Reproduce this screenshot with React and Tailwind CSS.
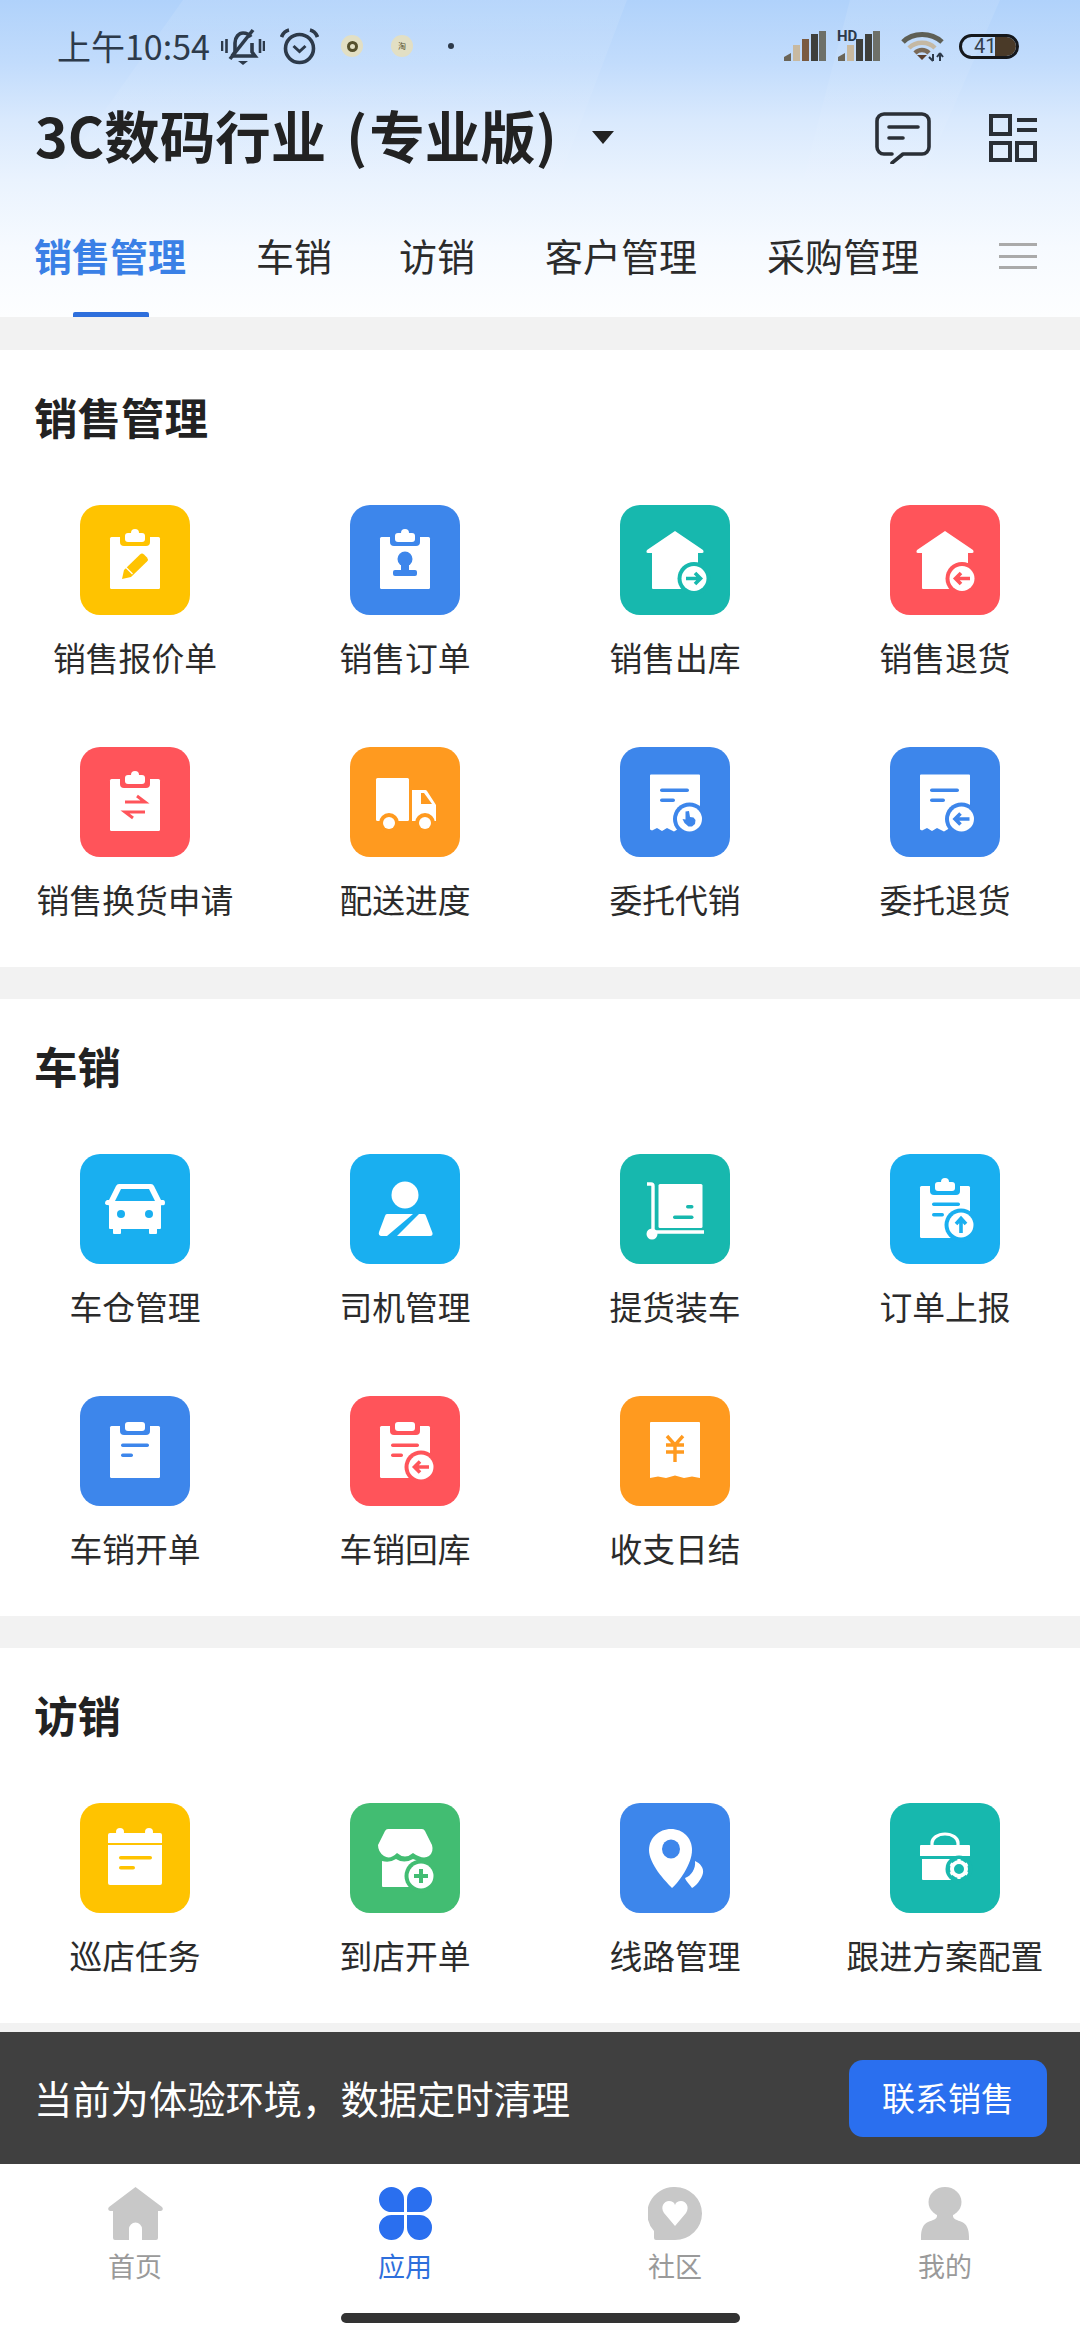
import React from "react"

const YELLOW = "#ffc300"
const BLUE = "#3d86eb"
const TEAL = "#17b8ae"
const RED = "#ff545a"
const ORANGE = "#ff9a1f"
const SKY = "#19aff0"
const GREEN = "#42bd72"

// clipboard used by most tiles
function Clip({ c, bump = true, y = 0 }) {
  return (
    <g transform={`translate(0 ${y})`}>
      <rect x="30" y="32" width="50" height="52" rx="1.5" fill="#fff" />
      <path d="M40 26h30v11a4 4 0 0 1-4 4H44a4 4 0 0 1-4-4z" fill={c} />
      <rect x="45" y="28" width="20" height="9" rx="3" fill="#fff" />
      {bump && <circle cx="55" cy="28" r="4" fill="#fff" />}
    </g>
  )
}

function Badge({ cx, cy, c, children }) {
  return (
    <g>
      <circle cx={cx} cy={cy} r="16.5" fill={c} />
      <circle cx={cx} cy={cy} r="12.5" fill="#fff" />
      {children}
    </g>
  )
}

function Arrow({ cx, cy, c, dir }) {
  const d = {
    right: `M${cx - 8} ${cy}h14M${cx + 1} ${cy - 5.5}l5.5 5.5l-5.5 5.5`,
    left: `M${cx + 8} ${cy}h-14M${cx - 1} ${cy - 5.5}l-5.5 5.5l5.5 5.5`,
    up: `M${cx} ${cy + 8}v-14M${cx - 5} ${cy - 1}l5 -5.5l5 5.5`,
  }[dir]
  return <path d={d} stroke={c} strokeWidth="3.6" fill="none" />
}

function Receipt({ c }) {
  return (
    <g>
      <path d="M30 28.5a1 1 0 0 1 1-1h48a1 1 0 0 1 1 1V84l-8-2.5-6 2.5-7-2.5-5 3-7-3.5-5 3-5-3-5 2.5-2-1z" fill="#fff" />
      <rect x="40" y="41.5" width="29" height="3.6" rx="1.8" fill={c} />
      <rect x="40" y="51.5" width="15" height="3.6" rx="1.8" fill={c} />
    </g>
  )
}

function House({ c, cx, dir }) {
  return (
    <g>
      <path d="M55 26L83 45q1.5 3-1 3h-4v36H33a1 1 0 0 1-1-1V48h-4q-2.5 0-1-3z" fill="#fff" />
      <Badge cx={cx} cy={73.5} c={c}>
        <Arrow cx={cx} cy={73.5} c={c} dir={dir} />
      </Badge>
    </g>
  )
}

const ICONS = {
  quote: (c) => (
    <g>
      <Clip c={c} />
      <path d="M42 74l2-9L60 49.5a3 3 0 0 1 4 0l3 3a3 3 0 0 1 0 4L51 72z" fill={c} />
      <path d="M45.5 62l7 7" stroke="#fff" strokeWidth="1.2" />
    </g>
  ),
  order: (c) => (
    <g>
      <Clip c={c} />
      <circle cx="55" cy="54" r="7.5" fill={c} />
      <rect x="51" y="56" width="8" height="10" fill={c} />
      <rect x="43" y="65" width="24" height="6" rx="2" fill={c} />
    </g>
  ),
  out: (c) => <House c={c} cx={74} dir="right" />,
  back: (c) => <House c={c} cx={72} dir="left" />,
  swap: (c) => (
    <g>
      <Clip c={c} />
      <path d="M45 55h20l-8-6M65 65H45l8 6" stroke={c} strokeWidth="3" fill="none" />
    </g>
  ),
  truck: (c) => (
    <g>
      <rect x="26" y="31" width="33" height="43" rx="1.5" fill="#fff" />
      <path d="M62 43h13a2 2 0 0 1 2 1l9 14v16H62z" fill="#fff" />
      <path d="M71 46h3l8 11H71z" fill={c} />
      <circle cx="39" cy="76" r="10" fill={c} />
      <circle cx="39" cy="76" r="6" fill="#fff" />
      <circle cx="75" cy="76" r="10" fill={c} />
      <circle cx="75" cy="76" r="6" fill="#fff" />
    </g>
  ),
  consign: (c) => (
    <g>
      <Receipt c={c} />
      <Badge cx={69.5} cy={72} c={c}>
        <path d="M65.5 64.5l3.5-.5 1 6 3.5.5 2 2.5-.5 4-3 2.500h-3.5l-4-3.5-2-4 3 .5z" fill={c} />
      </Badge>
    </g>
  ),
  consignBack: (c) => (
    <g>
      <Receipt c={c} />
      <Badge cx={71.5} cy={72} c={c}>
        <Arrow cx={71.5} cy={72} c={c} dir="left" />
      </Badge>
    </g>
  ),
  car: (c) => (
    <g>
      <path d="M39 30h32q2 0 3 2l7 14h2q2 0 2 3t-3 2q-1 0-1 1v22q0 1-1 1h-3v4q0 1-1 1h-6q-1 0-1-1v-4H41v4q0 1-1 1h-6q-1 0-1-1v-4h-3q-1 0-1-1V52q0-1-1-1-3 0-3-2t2-3h2l7-14q1-2 3-2z" fill="#fff" />
      <path d="M41 35h28l6 12H35z" fill={c} />
      <circle cx="41" cy="60" r="4" fill={c} />
      <circle cx="69" cy="60" r="4" fill={c} />
    </g>
  ),
  driver: () => (
    <g fill="#fff">
      <circle cx="55" cy="41" r="13.5" />
      <path d="M37 60h26L37 82h-6q-3-1-2-4l6-16q.5-2 2-2z" />
      <path d="M69 60h5q1.5 0 2 2l6.5 17q.5 3-2.5 3H47z" />
    </g>
  ),
  trolley: (c) => (
    <g>
      <path d="M27 30h4q2 0 2 2v46h51" stroke="#fff" strokeWidth="3.4" fill="none" />
      <circle cx="32" cy="80" r="5.5" fill="#fff" />
      <rect x="38.5" y="30" width="44" height="44" rx="1.5" fill="#fff" />
      <rect x="66" y="51" width="7.5" height="3.4" rx="1.7" fill={c} />
      <rect x="53" y="61.5" width="20.5" height="3.4" rx="1.7" fill={c} />
    </g>
  ),
  report: (c) => (
    <g>
      <Clip c={c} />
      <rect x="42" y="48.5" width="28" height="3.4" rx="1.7" fill={c} />
      <rect x="42" y="59" width="12" height="3.4" rx="1.7" fill={c} />
      <Badge cx={71} cy={71} c={c}>
        <Arrow cx={71} cy={71} c={c} dir="up" />
      </Badge>
    </g>
  ),
  plain: (c) => (
    <g>
      <Clip c={c} bump={false} y={-2} />
      <rect x="41" y="47.5" width="28" height="3.4" rx="1.7" fill={c} />
      <rect x="41" y="57.5" width="12" height="3.4" rx="1.7" fill={c} />
    </g>
  ),
  carBack: (c) => (
    <g>
      <Clip c={c} bump={false} y={-2} />
      <rect x="41" y="47.5" width="28" height="3.4" rx="1.7" fill={c} />
      <rect x="41" y="57.5" width="12" height="3.4" rx="1.7" fill={c} />
      <Badge cx={71} cy={71} c={c}>
        <Arrow cx={71} cy={71} c={c} dir="left" />
      </Badge>
    </g>
  ),
  cash: (c) => (
    <g>
      <path d="M30 27a1 1 0 0 1 1-1h48a1 1 0 0 1 1 1v55l-8-1.5-8 1.5-9-2.5-9 2.5-8-1.5-8 1.5z" fill="#fff" />
      <path d="M47 40l8 9 8-9M46 49h18M46 56h18M55 49v17" stroke={c} strokeWidth="3.4" fill="none" />
    </g>
  ),
  task: (c) => (
    <g>
      <circle cx="40" cy="29" r="4" fill="#fff" />
      <circle cx="69" cy="29" r="4" fill="#fff" />
      <path d="M28 32a2 2 0 0 1 2-2h50a2 2 0 0 1 2 2v8H28z" fill="#fff" />
      <path d="M28 42h54v38a2 2 0 0 1-2 2H30a2 2 0 0 1-2-2z" fill="#fff" />
      <rect x="39" y="53" width="33" height="3.6" rx="1.8" fill={c} />
      <rect x="39" y="63" width="16" height="3.6" rx="1.8" fill={c} />
    </g>
  ),
  shop: (c) => (
    <g>
      <path d="M38 26h34q2 0 3 2l7 14q2 7-3 11-6 4-16-3-8 7-16 0-7 7-13 3-6-4-6-11l7-14q1-2 3-2z" fill="#fff" />
      <path d="M32 58q8 2 14-2 8 5 17 0 4 2 8 2v26H33a1 1 0 0 1-1-1z" fill="#fff" />
      <Badge cx={71} cy={73} c={c}>
        <path d="M71 66v14M64 73h14" stroke={c} strokeWidth="4" />
      </Badge>
    </g>
  ),
  route: (c) => (
    <g>
      <path d="M51 26c12 0 21 9 21 21 0 14-13 32-20 38C45 78 29 61 29 47c0-12 10-21 22-21z" fill="#fff" />
      <ellipse cx="51" cy="46" rx="9" ry="9.5" fill={c} />
      <path d="M75 58c5 2 9 7 8 12-1 6-8 14-11 15-2-3-6-7-7-10 6-2 11-9 10-17z" fill="#fff" />
    </g>
  ),
  plan: (c) => (
    <g>
      <path d="M42 42v-2a13 9 0 0 1 26 0v2" stroke="#fff" strokeWidth="3.2" fill="none" />
      <path d="M31 42h48a1 1 0 0 1 1 1v10H30V43a1 1 0 0 1 1-1z" fill="#fff" />
      <path d="M32 56h30v21H33a1 1 0 0 1-1-1z" fill="#fff" />
      <circle cx="69" cy="66" r="13.5" fill={c} />
      <circle cx="69" cy="66" r="7" fill="none" stroke="#fff" strokeWidth="4" />
      <path d="M69 56v3.5M69 72.5V76M60.5 61l3 1.7M74.500 69.300l3 1.7M60.5 71l3-1.7M74.5 62.700l3-1.7" stroke="#fff" strokeWidth="3.2" />
    </g>
  ),
}

const sections = [
  {
    title: "销售管理",
    items: [
      ["销售报价单", "bg-[#ffc300]", YELLOW, "quote"],
      ["销售订单", "bg-[#3d86eb]", BLUE, "order"],
      ["销售出库", "bg-[#17b8ae]", TEAL, "out"],
      ["销售退货", "bg-[#ff545a]", RED, "back"],
      ["销售换货申请", "bg-[#ff545a]", RED, "swap"],
      ["配送进度", "bg-[#ff9a1f]", ORANGE, "truck"],
      ["委托代销", "bg-[#3d86eb]", BLUE, "consign"],
      ["委托退货", "bg-[#3d86eb]", BLUE, "consignBack"],
    ],
  },
  {
    title: "车销",
    items: [
      ["车仓管理", "bg-[#19aff0]", SKY, "car"],
      ["司机管理", "bg-[#19aff0]", SKY, "driver"],
      ["提货装车", "bg-[#17b8ae]", TEAL, "trolley"],
      ["订单上报", "bg-[#19aff0]", SKY, "report"],
      ["车销开单", "bg-[#3d86eb]", BLUE, "plain"],
      ["车销回库", "bg-[#ff545a]", RED, "carBack"],
      ["收支日结", "bg-[#ff9a1f]", ORANGE, "cash"],
    ],
  },
  {
    title: "访销",
    items: [
      ["巡店任务", "bg-[#ffc300]", YELLOW, "task"],
      ["到店开单", "bg-[#42bd72]", GREEN, "shop"],
      ["线路管理", "bg-[#3d86eb]", BLUE, "route"],
      ["跟进方案配置", "bg-[#17b8ae]", TEAL, "plan"],
    ],
  },
]

function Tile({ label, bg, color, icon }) {
  return (
    <div className="flex flex-col items-center">
      <div className={`w-[110px] h-[110px] rounded-[20px] ${bg}`}>
        <svg viewBox="0 0 110 110" className="w-full h-full">{ICONS[icon](color)}</svg>
      </div>
      <div className="mt-[19px] text-[32.8px] leading-[46px] text-[#2b2b2b] whitespace-nowrap">{label}</div>
    </div>
  )
}

function Section({ title, items }) {
  return (
    <div className="bg-white">
      <div className="h-[155px] pt-[35px] pl-[34px]">
        <div className="h-[70px] pb-[7px] flex items-center text-[43.5px] font-bold text-[#222]">{title}</div>
      </div>
      <div className="grid grid-cols-4 auto-rows-[220px] gap-y-[22px]">
        {items.map((it) => (
          <Tile key={it[0]} label={it[0]} bg={it[1]} color={it[2]} icon={it[3]} />
        ))}
      </div>
    </div>
  )
}

function Signal({ third }) {
  return (
    <svg viewBox="0 0 42 30" className="w-[42px] h-[30px]">
      <path d="M0 30v-4l7-4v8z" fill="#6b6558" />
      <rect x="9" y="14" width="7" height="16" fill="#c8b9a0" />
      <rect x="18" y="8" width="7" height="22" fill={third} />
      <rect x="27" y="3" width="7" height="27" fill="#3e3f3b" />
      <rect x="35" y="0" width="7" height="30" fill="#6e7068" />
    </svg>
  )
}

function StatusBar() {
  return (
    <div className="relative h-[92px] flex items-center pl-[57px] pr-[61px] text-[#2d3a4a]">
      <span className="text-[34px] leading-none w-[153px] whitespace-nowrap">上午10:54</span>
      <svg viewBox="0 0 44 38" className="ml-[11px] w-[44px] h-[38px] mt-[2px]" fill="none" stroke="#2d3a4a" strokeWidth="3.6">
        <path d="M1 13v10M5.5 11v14M39 11v14M43 13v10" strokeWidth="2.6" />
        <path d="M11 28l3-4V15c0-6 4-10 8-10 3 0 6 1 8 4M31 15v9l3 4H12" />
        <path d="M32 2L9 31" />
        <path d="M17 33h10l-5 4z" fill="#2d3a4a" stroke="none" />
      </svg>
      <svg viewBox="0 0 39 37" className="ml-[15px] w-[39px] h-[37px]" fill="none" stroke="#2d3a4a" strokeWidth="3.6">
        <circle cx="19.5" cy="20.5" r="14" />
        <path d="M13.5 18l6 5.5 6-5.5" strokeWidth="3" />
        <path d="M1.500 9Q4 3 9 2M37.5 9Q35 3 30 2" strokeWidth="3.8" />
      </svg>
      <div className="ml-[22px] w-[22px] h-[22px] rounded-full bg-[#e2dfc4] flex items-center justify-center">
        <div className="w-[11px] h-[11px] rounded-full border-[3px] border-[#55502c]"></div>
      </div>
      <div className="ml-[28px] w-[22px] h-[22px] rounded-full bg-[#e2dfc4] flex items-center justify-center text-[8px] leading-none text-[#55502c]">淘</div>
      <div className="ml-[35px] w-[6px] h-[6px] rounded-full bg-[#2d3a4a]"></div>
      <div className="flex-1"></div>
      <Signal third="#7a5a40" />
      <div className="relative ml-[12px] w-[42px] h-[30px]">
        <Signal third="#3e3f3b" />
        <span className="absolute left-[-1px] top-[-2px] text-[15px] leading-none font-bold font-['Roboto',sans-serif] text-[#2d3a4a]">HD</span>
      </div>
      <svg viewBox="0 0 44 32" className="ml-[21px] w-[44px] h-[32px]" fill="none">
        <path d="M2 12C12 2 30 2 41 12" stroke="#5e5f55" strokeWidth="5" />
        <path d="M8 18C15 11 27 11 34 18" stroke="#c4b8a4" strokeWidth="4.5" />
        <path d="M14 23C18 19 24 19 28 23" stroke="#7a6a58" strokeWidth="4.5" />
        <path d="M16 25h10l-5 5z" fill="#5a4030" />
        <path d="M32 24v7M28 27l4 4M39 31v-8M39 23l3 4M36 27l3-4" stroke="#2d3a4a" strokeWidth="2" />
      </svg>
      <div className="relative ml-[14px] w-[60px] h-[25px] rounded-full border-[3px] border-[#15181c] overflow-hidden flex items-center">
        <span className="absolute left-[12px] top-0 text-[20px] leading-[19px] font-['Roboto',sans-serif] text-[#34404c]">41</span>
        <div className="absolute left-[33px] top-0 bottom-0 right-0 bg-[#4a3a28]"></div>
      </div>
    </div>
  )
}

function Header() {
  return (
    <div className="relative h-[317px] bg-[linear-gradient(180deg,#b0d2fb_0%,#c2dcfc_20%,#d9e9fd_38%,#eaf3fe_57%,#f6faff_78%,#fdfeff_100%)]">
      <svg viewBox="0 0 1080 317" className="absolute inset-0 w-full h-full">
        <defs>
          <linearGradient id="streak" x1="0" y1="0" x2="0" y2="1">
            <stop offset="0" stopColor="#fff" stopOpacity="0.1" />
            <stop offset="1" stopColor="#fff" stopOpacity="0" />
          </linearGradient>
        </defs>
        <polygon points="183,0 627,0 540,230 20,230" fill="url(#streak)" />
        <polygon points="850,0 1000,0 900,230 790,230" fill="url(#streak)" />
      </svg>
      <div className="relative">
        <StatusBar />
        <div className="h-[92px] pb-[6px] flex items-center pl-[35px] pr-[43px]">
          <span className="text-[55.5px] leading-none font-bold text-[#222] whitespace-nowrap">
            3C数码行业<span className="ml-[20px] mr-[2px]">(</span>专业版)
          </span>
          <div className="ml-[35px] mt-[4px] w-0 h-0 border-l-[11px] border-r-[11px] border-t-[13px] border-l-transparent border-r-transparent border-t-[#222]"></div>
          <div className="flex-1"></div>
          <svg viewBox="0 0 56 52" className="w-[56px] h-[52px] mt-[6px]" fill="none" stroke="#2a2f36" strokeWidth="3.6" strokeLinecap="round" strokeLinejoin="round">
            <path d="M9 2h38a7 7 0 0 1 7 7v26a7 7 0 0 1-7 7H28L17 51M17 42H9a7 7 0 0 1-7-7V9a7 7 0 0 1 7-7" />
            <path d="M14 15h29M14 26h14" />
          </svg>
          <svg viewBox="0 0 48 48" className="ml-[58px] w-[48px] h-[48px] mt-[6px]" fill="none" stroke="#2a2f36" strokeWidth="4">
            <rect x="2" y="2" width="19" height="18" />
            <rect x="2" y="29" width="19" height="17" />
            <rect x="28" y="29" width="18" height="17" />
            <path d="M28 6h20M28 16h20" />
          </svg>
        </div>
        <div className="flex items-start pl-[34px] pt-[49px] gap-x-[70px] text-[38px] leading-[44px] text-[#2b2b2b]">
          <div className="relative font-semibold text-[#3a80e6]">
            销售管理
            <div className="absolute left-[39px] top-[79px] w-[76px] h-[5px] rounded-t-[2px] bg-[#2e6fdc]"></div>
          </div>
          <div>车销</div>
          <div className="-ml-[3px]">访销</div>
          <div>客户管理</div>
          <div>采购管理</div>
          <div className="ml-[10px] mt-[10px] w-[38px] flex flex-col gap-y-[8.5px]">
            <div className="h-[3px] bg-[#aaa]"></div>
            <div className="h-[3px] bg-[#aaa]"></div>
            <div className="h-[3px] bg-[#aaa]"></div>
          </div>
        </div>
      </div>
    </div>
  )
}

function TabBar() {
  return (
    <div className="flex-1 bg-white">
      <div className="grid grid-cols-4 pt-[23px]">
        <div className="flex flex-col items-center">
          <svg viewBox="0 0 55 53" className="w-[55px] h-[53px]" fill="#c8c8c8">
            <path fillRule="evenodd" d="M27.5 0L54 20q2 3-1 4h-3v27a2 2 0 0 1-2 2H7a2 2 0 0 1-2-2V24H2q-3-1-1-4zM21 53V42a6.5 6.5 0 0 1 13 0v11z" />
          </svg>
          <span className="mt-[8px] text-[27px] leading-[36px] text-[#9a9a9a]">首页</span>
        </div>
        <div className="flex flex-col items-center">
          <svg viewBox="0 0 53 53" className="w-[53px] h-[53px]" fill="#2a6fef">
            <path d="M25 25H13A12.5 12.5 0 1 1 25 12.5z" />
            <path d="M28 25h12A12.5 12.5 0 1 0 28 12.5z" />
            <path d="M25 28H13a12.5 12.5 0 1 0 12 12.5z" />
            <path d="M28 28h12a12.5 12.5 0 1 1-12 12.5z" />
          </svg>
          <span className="mt-[8px] text-[27px] leading-[36px] text-[#2e6fdc]">应用</span>
        </div>
        <div className="flex flex-col items-center">
          <svg viewBox="0 0 54 53" className="w-[54px] h-[53px]">
            <path d="M27 0a27 26.5 0 0 1 0 53H8a2 2 0 0 1-2-2V44A27 26.5 0 0 1 27 0z" fill="#c8c8c8" />
            <path d="M27 39L16 26c-4-6 0-12 5-12 3 0 5 1 6 4 1-3 3-4 6-4 5 0 9 6 5 12z" fill="#fff" />
          </svg>
          <span className="mt-[8px] text-[27px] leading-[36px] text-[#9a9a9a]">社区</span>
        </div>
        <div className="flex flex-col items-center">
          <svg viewBox="0 0 48 53" className="w-[48px] h-[53px]" fill="#c8c8c8">
            <ellipse cx="24" cy="15" rx="16.5" ry="15" />
            <path d="M16 26h16v3c0 3 4 4 9 6 5 2 7 8 7 15v3H0v-3c0-7 2-13 7-15 5-2 9-3 9-6z" />
          </svg>
          <span className="mt-[8px] text-[27px] leading-[36px] text-[#9a9a9a]">我的</span>
        </div>
      </div>
      <div className="mx-auto mt-[29px] w-[399px] h-[10px] rounded-full bg-[#333]"></div>
    </div>
  )
}

export default function App() {
  return (
    <div className="w-[1080px] h-[2340px] flex flex-col overflow-hidden bg-[#f2f2f2] font-['Noto_Sans_CJK_SC','Noto_Sans',sans-serif]">
      <Header />
      <div className="h-[33px] shrink-0"></div>
      <Section {...sections[0]} />
      <div className="h-[32px] shrink-0"></div>
      <Section {...sections[1]} />
      <div className="h-[32px] shrink-0"></div>
      <Section {...sections[2]} />
      <div className="h-[9px] shrink-0"></div>
      <div className="h-[132px] shrink-0 bg-[#404040] flex items-center justify-between pl-[34px] pr-[33px]">
        <span className="text-[38.3px] text-white">当前为体验环境，数据定时清理</span>
        <button className="w-[198px] h-[77px] rounded-[14px] bg-[#2a6fef] text-white text-[33px]">联系销售</button>
      </div>
      <TabBar />
    </div>
  )
}
